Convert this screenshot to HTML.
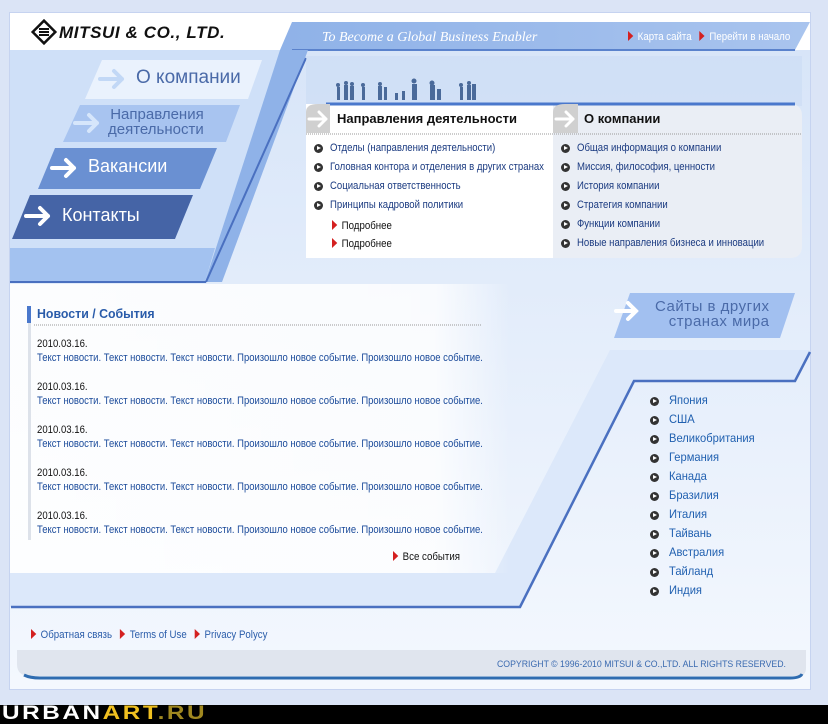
<!DOCTYPE html>
<html><head><meta charset="utf-8">
<style>
*{margin:0;padding:0;box-sizing:border-box}
body{width:828px;height:724px;overflow:hidden;background:#dbe4f6;font-family:"Liberation Sans",Arial,sans-serif;position:relative}
.a{position:absolute;white-space:nowrap;transform-origin:0 0}
.li{font-size:11px;color:#1a3a80;transform:scaleX(.87)}
.bul{position:absolute;width:9px;height:9px;border-radius:50%;background:#333}
.bul:after{content:"";position:absolute;left:3px;top:2px;border-left:4px solid #fff;border-top:2.5px solid transparent;border-bottom:2.5px solid transparent}
.tri{display:inline-block;border-left:6px solid #d42020;border-top:5px solid transparent;border-bottom:5px solid transparent;margin-right:5px;vertical-align:-1px}
.date{font-size:11px;color:#111;transform:scaleX(.87)}
.nt{font-size:11px;color:#1a4a9a;transform:scaleX(.86)}
.cty{font-size:12px;color:#2060b0;transform:scaleX(.93)}
</style></head><body>
<svg class="a" style="left:0;top:0" width="828" height="724">
<defs>
<linearGradient id="bg" x1="0" y1="0" x2="0" y2="1"><stop offset="0" stop-color="#d6e4f8"/><stop offset="1" stop-color="#f4f8fe"/></linearGradient>
<linearGradient id="top" x1="0" y1="0" x2="1" y2="0"><stop offset="0" stop-color="#8fb2e8"/><stop offset="1" stop-color="#a9c4ee"/></linearGradient>
<linearGradient id="nw" x1="0" y1="0" x2="1" y2="0"><stop offset="0" stop-color="#fff" stop-opacity=".9"/><stop offset=".85" stop-color="#fff" stop-opacity=".8"/><stop offset="1" stop-color="#fff" stop-opacity="0"/></linearGradient>
</defs>
<rect x="9" y="12" width="802" height="678" fill="#c6d3f0"/>
<rect x="10" y="13" width="800" height="676" fill="url(#bg)"/>
<rect x="10" y="13" width="800" height="37" fill="#fff"/>
<polygon points="292,22 810,22 795,50 280,50" fill="url(#top)"/>
<line x1="292" y1="50" x2="795" y2="50" stroke="#5a82cc" stroke-width="2"/>
<polygon points="10,50 285,50 205,282 10,282" fill="#cfe0f8"/>
<polygon points="280,50 308,50 222,282 205,282" fill="#8fb2e8"/>
<polygon points="10,248 215,248 205,282 10,282" fill="#a3c2f0"/>
<line x1="10" y1="282" x2="206" y2="282" stroke="#4a70c0" stroke-width="2"/>
<line x1="206" y1="282" x2="306" y2="58" stroke="#4a70c0" stroke-width="2"/>
<polygon points="102,60 262,60 248,99 85,99" fill="#eaf2fd"/>
<polygon points="80,105 240,105 226,142 63,142" fill="#a8c4f0"/>
<polygon points="55,148 217,148 200,189 38,189" fill="#6a90d2"/>
<polygon points="30,195 193,195 175,239 12,239" fill="#4564a6"/>
<g fill="none" stroke-linecap="round" stroke-linejoin="round">
<path d="M100,79 H122 M114,71 L122,79 L114,87" stroke="#c2d8f6" stroke-width="4"/>
<path d="M75,123 H97 M89,115 L97,123 L89,131" stroke="#d6e6fb" stroke-width="4"/>
<path d="M52,168 H74 M66,160 L74,168 L66,176" stroke="#fff" stroke-width="4"/>
<path d="M26,216 H48 M40,208 L48,216 L40,224" stroke="#fff" stroke-width="4"/>
</g>
<rect x="306" y="56" width="496" height="50" fill="#c8daf4" opacity=".5"/>
<path d="M306,104 H553 V258 H306 Z" fill="#fff"/>
<path d="M553,104 H790 Q802,104 802,116 V246 Q802,258 790,258 H553 Z" fill="#eaeef5"/>
<line x1="326" y1="104" x2="795" y2="104" stroke="#4a78cc" stroke-width="3"/>
<path d="M306,133 V112 Q306,104 318,104 H330 V133 Z" fill="#d0d0d0"/>
<path d="M553,133 V112 Q553,104 565,104 H578 V133 Z" fill="#d0d0d0"/>
<g fill="none" stroke="#fff" stroke-width="3" stroke-linejoin="round" stroke-linecap="round"><path d="M309,119 H326 M319,112 L326,119 L319,126"/><path d="M556,119 H573 M566,112 L573,119 L566,126"/></g>
<line x1="306" y1="134" x2="802" y2="134" stroke="#999" stroke-dasharray="1,1"/>
<g fill="#4a6a9a">
<circle cx="338" cy="85" r="2"/><rect x="337" y="87" width="3" height="13"/><circle cx="346" cy="83" r="2"/><rect x="344" y="85" width="4" height="15"/><circle cx="352" cy="84" r="2"/><rect x="350" y="86" width="4" height="14"/><circle cx="363" cy="85" r="2"/><rect x="362" y="87" width="3" height="13"/><circle cx="380" cy="84" r="2"/><rect x="378" y="86" width="4" height="14"/><rect x="384" y="87" width="3" height="13"/><rect x="395" y="93" width="3" height="7"/><rect x="402" y="91" width="3" height="9"/><circle cx="414" cy="81" r="2.5"/><rect x="412" y="84" width="5" height="16"/><circle cx="432" cy="83" r="2.5"/><rect x="430" y="85" width="5" height="15"/><rect x="437" y="89" width="4" height="11"/><circle cx="461" cy="85" r="2"/><rect x="460" y="87" width="3" height="13"/><circle cx="469" cy="83" r="2"/><rect x="467" y="85" width="4" height="15"/><rect x="472" y="84" width="4" height="16"/>
</g>
<rect x="10" y="573" width="500" height="34" fill="#dce8fa"/>
<polygon points="495,573 610,350 810,350 795,380 634,380 520,607 495,607" fill="#dce8fa"/>
<rect x="10" y="284" width="500" height="289" fill="url(#nw)"/>
<polyline points="11,607 520,607 634,381 795,381 810,352" fill="none" stroke="#4a70c0" stroke-width="2.5"/>
<polygon points="630,293 795,293 780,338 614,338" fill="#a2c0f0"/>
<path d="M616,311 H636 M628,303 L636,311 L628,319" stroke="#fff" stroke-width="4" fill="none" stroke-linecap="round"/>
<rect x="27" y="306" width="4" height="17" fill="#4a78cc"/>
<rect x="28" y="323" width="3" height="217" fill="#dde2ea"/>
<line x1="34" y1="325" x2="481" y2="325" stroke="#999" stroke-dasharray="1,1"/>
<path d="M17,650 H806 V668 Q806,676 798,676 H30 Q17,676 17,664 Z" fill="#e0e5ee"/>
<path d="M24,675 Q30,678 40,678 H790 Q800,678 802,674" stroke="#2f6cb0" stroke-width="3" fill="none"/>
<rect x="0" y="705" width="828" height="19" fill="#000"/>
<g transform="translate(44,32)"><rect x="-8" y="-8" width="16" height="16" transform="rotate(45)" fill="none" stroke="#111" stroke-width="2.5"/><rect x="-5" y="-4" width="10" height="2" fill="#111"/><rect x="-5" y="-1" width="10" height="2" fill="#111"/><rect x="-5" y="2" width="10" height="2" fill="#111"/></g>
</svg>
<div class="a" style="left:59px;top:23px;font:italic 900 17px 'Liberation Sans',sans-serif;color:#111;letter-spacing:0.6px">MITSUI &amp; CO., LTD.</div>
<div class="a" style="left:322px;top:30px;font:italic 14px 'Liberation Serif',serif;color:#fff">To Become a Global Business Enabler</div>
<div class="a" style="left:628px;top:31px;font-size:11px;color:#fff;transform:scaleX(.88)"><span class="tri"></span>Карта сайта &nbsp; <span class="tri"></span>Перейти в начало</div>
<div class="a" style="left:136px;top:67px;font-size:19px;color:#4a6aa8">О компании</div>
<div class="a" style="left:108px;top:107px;font-size:15px;color:#4a6aa8;line-height:15px;text-align:right">Направления<br>деятельности</div>
<div class="a" style="left:88px;top:156px;font-size:18px;color:#fff">Вакансии</div>
<div class="a" style="left:62px;top:205px;font-size:18px;color:#fff">Контакты</div>
<div class="a" style="left:337px;top:111px;font-size:13px;font-weight:bold;color:#111">Направления деятельности</div>
<div class="a" style="left:584px;top:111px;font-size:13px;font-weight:bold;color:#111">О компании</div>
<div class="bul" style="left:314px;top:144px"></div><div class="a li" style="left:330px;top:142px">Отделы (направления деятельности)</div>
<div class="bul" style="left:314px;top:163px"></div><div class="a li" style="left:330px;top:161px">Головная контора и отделения в других странах</div>
<div class="bul" style="left:314px;top:182px"></div><div class="a li" style="left:330px;top:180px">Социальная ответственность</div>
<div class="bul" style="left:314px;top:201px"></div><div class="a li" style="left:330px;top:199px">Принципы кадровой политики</div>
<div class="a" style="left:332px;top:220px;font-size:11px;color:#111;transform:scaleX(.88)"><span class="tri"></span>Подробнее</div>
<div class="a" style="left:332px;top:238px;font-size:11px;color:#111;transform:scaleX(.88)"><span class="tri"></span>Подробнее</div>
<div class="bul" style="left:561px;top:144px"></div><div class="a li" style="left:577px;top:142px">Общая информация о компании</div>
<div class="bul" style="left:561px;top:163px"></div><div class="a li" style="left:577px;top:161px">Миссия, философия, ценности</div>
<div class="bul" style="left:561px;top:182px"></div><div class="a li" style="left:577px;top:180px">История компании</div>
<div class="bul" style="left:561px;top:201px"></div><div class="a li" style="left:577px;top:199px">Стратегия компании</div>
<div class="bul" style="left:561px;top:220px"></div><div class="a li" style="left:577px;top:218px">Функции компании</div>
<div class="bul" style="left:561px;top:239px"></div><div class="a li" style="left:577px;top:237px">Новые направления бизнеса и инновации</div>
<div class="a" style="left:37px;top:306px;font-size:13px;font-weight:bold;color:#2a5caa;transform:scaleX(.95)">Новости / События</div>
<div class="a date" style="left:37px;top:338px">2010.03.16.</div><div class="a nt" style="left:37px;top:352px">Текст новости. Текст новости. Текст новости. Произошло новое событие. Произошло новое событие.</div>
<div class="a date" style="left:37px;top:381px">2010.03.16.</div><div class="a nt" style="left:37px;top:395px">Текст новости. Текст новости. Текст новости. Произошло новое событие. Произошло новое событие.</div>
<div class="a date" style="left:37px;top:424px">2010.03.16.</div><div class="a nt" style="left:37px;top:438px">Текст новости. Текст новости. Текст новости. Произошло новое событие. Произошло новое событие.</div>
<div class="a date" style="left:37px;top:467px">2010.03.16.</div><div class="a nt" style="left:37px;top:481px">Текст новости. Текст новости. Текст новости. Произошло новое событие. Произошло новое событие.</div>
<div class="a date" style="left:37px;top:510px">2010.03.16.</div><div class="a nt" style="left:37px;top:524px">Текст новости. Текст новости. Текст новости. Произошло новое событие. Произошло новое событие.</div>
<div class="a" style="left:393px;top:551px;font-size:11px;color:#111;transform:scaleX(.88)"><span class="tri"></span>Все события</div>
<div class="a" style="left:655px;top:299px;font-size:15px;color:#4a6aa8;line-height:15px;text-align:right;letter-spacing:.5px">Сайты в других<br>странах мира</div>
<div class="bul" style="left:650px;top:397px"></div><div class="a cty" style="left:669px;top:393px">Япония</div>
<div class="bul" style="left:650px;top:416px"></div><div class="a cty" style="left:669px;top:412px">США</div>
<div class="bul" style="left:650px;top:435px"></div><div class="a cty" style="left:669px;top:431px">Великобритания</div>
<div class="bul" style="left:650px;top:454px"></div><div class="a cty" style="left:669px;top:450px">Германия</div>
<div class="bul" style="left:650px;top:473px"></div><div class="a cty" style="left:669px;top:469px">Канада</div>
<div class="bul" style="left:650px;top:492px"></div><div class="a cty" style="left:669px;top:488px">Бразилия</div>
<div class="bul" style="left:650px;top:511px"></div><div class="a cty" style="left:669px;top:507px">Италия</div>
<div class="bul" style="left:650px;top:530px"></div><div class="a cty" style="left:669px;top:526px">Тайвань</div>
<div class="bul" style="left:650px;top:549px"></div><div class="a cty" style="left:669px;top:545px">Австралия</div>
<div class="bul" style="left:650px;top:568px"></div><div class="a cty" style="left:669px;top:564px">Тайланд</div>
<div class="bul" style="left:650px;top:587px"></div><div class="a cty" style="left:669px;top:583px">Индия</div>
<div class="a" style="left:31px;top:629px;font-size:11px;color:#2a5caa;transform:scaleX(.88)"><span class="tri"></span>Обратная связь &nbsp;&nbsp;<span class="tri"></span>Terms of Use &nbsp;&nbsp;<span class="tri"></span>Privacy Polycy</div>
<div class="a" style="left:497px;top:659px;font-size:9px;color:#3a6ab0;transform:scaleX(.97)">COPYRIGHT © 1996-2010 MITSUI &amp; CO.,LTD. ALL RIGHTS RESERVED.</div>
<div class="a" style="left:2px;top:704px;font:900 19px/20px 'Liberation Sans',sans-serif;color:#fff;letter-spacing:2px;transform:scaleX(1.28)">URBAN<span style="color:#f0c020">ART</span><span style="color:#a08820">.RU</span></div>
</body></html>
